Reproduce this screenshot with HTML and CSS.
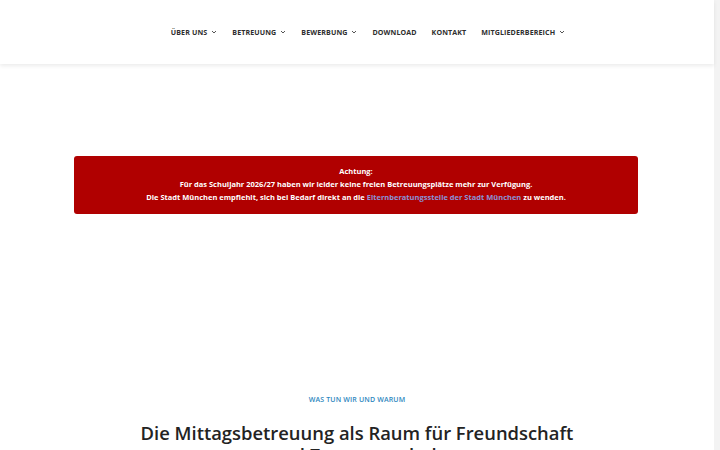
FILE: index.html
```html
<!DOCTYPE html>
<html lang="de">
<head>
<meta charset="utf-8">
<link rel="stylesheet" href="styles.css">
</head>
<body>
<div class="page">
  <div class="main">
    <header class="header">
      <nav class="nav">
        <a class="nav-item">ÜBER UNS <span class="chev"><svg width="6" height="4" viewBox="0 0 6 4"><path d="M1 1 L3 3 L5 1" fill="none" stroke="#555" stroke-width="1"/></svg></span></a>
        <a class="nav-item">BETREUUNG <span class="chev"><svg width="6" height="4" viewBox="0 0 6 4"><path d="M1 1 L3 3 L5 1" fill="none" stroke="#555" stroke-width="1"/></svg></span></a>
        <a class="nav-item">BEWERBUNG <span class="chev"><svg width="6" height="4" viewBox="0 0 6 4"><path d="M1 1 L3 3 L5 1" fill="none" stroke="#555" stroke-width="1"/></svg></span></a>
        <a class="nav-item">DOWNLOAD</a>
        <a class="nav-item">KONTAKT</a>
        <a class="nav-item">MITGLIEDERBEREICH <span class="chev"><svg width="6" height="4" viewBox="0 0 6 4"><path d="M1 1 L3 3 L5 1" fill="none" stroke="#555" stroke-width="1"/></svg></span></a>
      </nav>
    </header>
    <section class="notice-wrap">
      <div class="notice">
        <p>Achtung:</p>
        <p>Für das Schuljahr 2026/27 haben wir leider keine freien Betreuungsplätze mehr zur Verfügung.</p>
        <p>Die Stadt München empfiehlt, sich bei Bedarf direkt an die <a class="notice-link">Elternberatungsstelle der Stadt München</a> zu wenden.</p>
      </div>
    </section>
    <section class="intro">
      <div class="eyebrow">WAS TUN WIR UND WARUM</div>
      <h1 class="title">Die Mittagsbetreuung als Raum für Freundschaft und Zusammenhalt</h1>
    </section>
  </div>
  <div class="scroll-strip"></div>
</div>
</body>
</html>
```
FILE: styles.css
```css
html, body {
  margin: 0;
  padding: 0;
  height: 100%;
  overflow: hidden;
}
body {
  font-family: "Open Sans", "DejaVu Sans", sans-serif;
  background: #ffffff;
  color: #222;
}
.page {
  display: flex;
  height: 450px;
}
.main {
  width: 714px;
  flex: none;
  background: #fff;
}
.scroll-strip {
  flex: 1;
  background: #f3f3f3;
}
.header {
  height: 64px;
  background: #fff;
  box-shadow: 0 2px 4px rgba(0,0,0,0.08);
  display: flex;
  align-items: center;
  justify-content: center;
  position: relative;
}
.nav {
  display: flex;
  gap: 15px;
  padding-left: 22px;
}
.nav-item {
  font-size: 7.1px;
  font-weight: 700;
  letter-spacing: 0.1px;
  color: #2e2e2e;
  display: flex;
  align-items: center;
  gap: 4px;
}
.chev {
  display: inline-flex;
}
.notice-wrap {
  padding: 92px 76px 0 74px;
}
.notice {
  background: #b00000;
  border-radius: 3px;
  color: #fff;
  text-align: center;
  padding: 9px 10px 10px;
  font-size: 7.5px;
  font-weight: 700;
  line-height: 13px;
}
.notice p {
  margin: 0;
}
.notice-link {
  color: #8b93d6;
}
.intro {
  padding-top: 181px;
  text-align: center;
}
.eyebrow {
  font-size: 7px;
  font-weight: 600;
  color: #2f88c0;
  letter-spacing: 0.15px;
}
.title {
  margin: 18px auto 0;
  width: 460px;
  font-size: 18.4px;
  line-height: 22px;
  font-weight: 600;
  color: #232323;
}
```
